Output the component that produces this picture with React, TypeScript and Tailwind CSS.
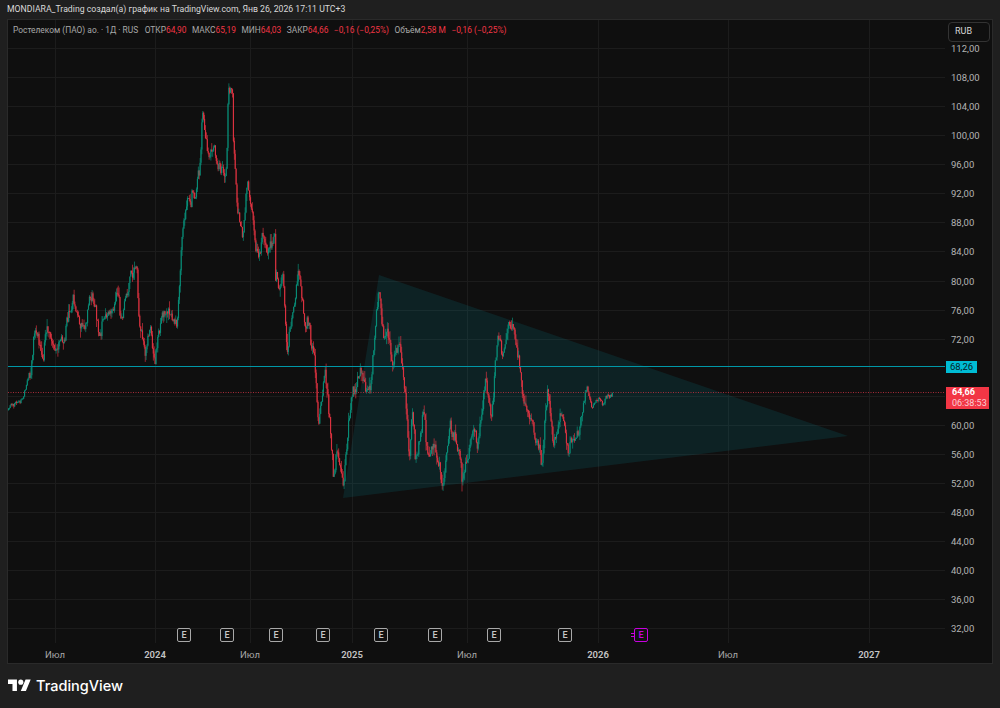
import React from "react";

// pixel trace of the price swing, page coordinates
const pricePath: [number, number][] = [
  [8, 410], [14, 406], [20, 402], [25, 388], [30, 372], [33, 345], [37, 330], [42, 355], [48, 325], [55, 345], [63, 337], [73, 295],
  [80, 323], [86, 318], [92, 295], [99, 340], [110, 308], [115, 295], [123, 316], [130, 268], [137, 275],
  [138, 312], [145, 355], [150, 330], [155, 360], [163, 310], [170, 312], [177, 315], [180, 265], [183, 222], [188, 192],
  [195, 205], [200, 160], [202, 106], [208, 158], [213, 145], [217, 165], [226, 168], [228, 84], [232, 90], [233, 137],
  [237, 200], [242, 235], [247, 185], [253, 217], [258, 268], [262, 224], [267, 255], [275, 236], [272, 286], [282, 278],
  [287, 345], [298, 278], [302, 304], [307, 327], [313, 345], [318, 424], [324, 373], [330, 422], [333, 482], [337, 458],
  [343, 489], [348, 427], [353, 390], [361, 374], [370, 391], [375, 328], [379, 280], [383, 340], [387, 332], [392, 372],
  [399, 339], [405, 400], [409, 460], [412, 413], [415, 454], [423, 418], [428, 454], [433, 441], [443, 480], [450, 420],
  [462, 473], [473, 428], [477, 443], [485, 388], [491, 413], [497, 345], [503, 356], [509, 326], [513, 335], [520, 367],
  [523, 403], [533, 429], [541, 460], [548, 385], [553, 438], [561, 409], [568, 446], [578, 429], [587, 394], [592, 406],
  [597, 398], [602, 403], [612, 392],
];

const priceAt = (x: number) => {
  for (let i = 1; i < pricePath.length; i++) {
    const [x0, y0] = pricePath[i - 1];
    const [x1, y1] = pricePath[i];
    if (x <= x1) return y0 + ((y1 - y0) * (x - x0)) / (x1 - x0);
  }
  return pricePath[pricePath.length - 1][1];
};

const makeBars = () => {
  let seed = 1337;
  const rnd = () => {
    seed = (seed * 16807) % 2147483647;
    return seed / 2147483647;
  };
  const bars = [];
  let prev = priceAt(8);
  let drift = 0;
  let n = 0;
  for (let x = 8; x <= 612; x += 0.9) {
    const calm = x < 30 || x > 585;
    // short swings that last a few bars, so the line doesn't read as smooth
    if (n++ % 4 === 0) drift = (rnd() - 0.5) * (calm ? 7 : 16);
    const close = priceAt(x) + drift + (rnd() - 0.5) * (calm ? 5 : 9);
    const top = Math.min(prev, close);
    const bottom = Math.max(prev, close);
    bars.push({
      x,
      top,
      bottom,
      high: Math.max(top - rnd() * rnd() * (calm ? 3 : 10), 79),
      low: Math.min(bottom + rnd() * rnd() * (calm ? 3 : 10), 497),
      color: close > prev ? "#f23645" : "#089981",
    });
    prev = close;
  }
  return bars;
};

const bars = makeBars();

const priceLabels = [
  ["112,00", 48], ["108,00", 77], ["104,00", 106], ["100,00", 135], ["96,00", 164], ["92,00", 193], ["88,00", 222],
  ["84,00", 251], ["80,00", 281], ["76,00", 310], ["72,00", 339], ["60,00", 425], ["56,00", 454], ["52,00", 483],
  ["48,00", 512], ["44,00", 541], ["40,00", 570], ["36,00", 599], ["32,00", 628],
] as const;

const timeLabels = [
  ["Июл", 55, false], ["2024", 155, true], ["Июл", 250, false], ["2025", 352, true],
  ["Июл", 467, false], ["2026", 598, true], ["Июл", 728, false], ["2027", 869, true],
] as const;

const earnings = [184, 227, 276, 323, 381, 435, 494, 565];

const Legend = ({ label, value }: { label: string; value: string }) => (
  <span className="flex">
    <span>{label}</span>
    <span className="text-[#f23645]">{value}</span>
  </span>
);

export default function App() {
  return (
    <div className="w-[1000px] h-[708px] bg-[#1f1f1f] flex flex-col overflow-hidden font-['Roboto',sans-serif] text-[#d4d4d4]">
      <div className="h-[19px] pl-[7px] pt-[1px] flex items-center text-[8.7px] text-[#d8d8d8] whitespace-nowrap">
        MONDIARA_Trading создал(а) график на TradingView.com, Янв 26, 2026 17:11 UTC+3
      </div>

      <div className="relative mx-[7px] h-[645px] border border-[#2a2a2a] bg-[#0f0f0f] overflow-hidden">
        <svg className="absolute inset-0" width="984" height="643" viewBox="8 20 984 643">
          {priceLabels.map(([label, y]) => (
            <line key={label} x1="8" x2="945" y1={y + 0.5} y2={y + 0.5} stroke="#1c1c1c" />
          ))}
          <line x1="8" x2="945" y1="396.5" y2="396.5" stroke="#1c1c1c" />
          {timeLabels.map(([label, x]) => (
            <line key={`${label}${x}`} x1={x + 0.5} x2={x + 0.5} y1="20" y2="643" stroke="#1c1c1c" />
          ))}
          <polygon points="379,275 848,436 343,498" fill="#00bcd4" fillOpacity="0.11" />
          {bars.map((b) => (
            <g key={b.x} fill={b.color} fillOpacity="0.75">
              <rect x={b.x} y={b.high} width="0.8" height={b.low - b.high} />
              <rect x={b.x - 0.2} y={b.top} width="1.2" height={Math.max(b.bottom - b.top, 0.8)} />
            </g>
          ))}
          <line x1="8" x2="945" y1="366.5" y2="366.5" stroke="#0097a7" strokeWidth="1.2" />
          <line x1="8" x2="945" y1="392.5" y2="392.5" stroke="#a62a38" strokeDasharray="1 1.5" />
        </svg>

        <div className="absolute left-[5px] top-[4px] flex gap-[5.5px] text-[8.4px] leading-[13px] text-[#a8a8a8] whitespace-nowrap">
          <span className="mr-[1px]">Ростелеком (ПАО) ао. · 1Д · RUS</span>
          <Legend label="ОТКР" value="64,90" />
          <Legend label="МАКС" value="65,19" />
          <Legend label="МИН" value="64,03" />
          <Legend label="ЗАКР" value="64,66" />
          <span className="text-[#f23645]">−0,16 (−0,25%)</span>
          <Legend label="Объём" value="2,58 M" />
          <span className="text-[#f23645]">−0,16 (−0,25%)</span>
        </div>

        <div className="absolute left-[940px] top-[2px] w-[42px] h-[20px] rounded-[4px] border border-[#333333] pl-[6px] flex items-center text-[9px] text-[#d8d8d8]">
          RUB
        </div>

        {priceLabels.map(([label, y]) => (
          <div
            key={label}
            className="absolute left-[943px] -translate-y-1/2 text-[9.5px] leading-[12px] text-[#b4b4b4]"
            style={{ top: y - 19 }}
          >
            {label}
          </div>
        ))}

        <div className="absolute left-[938px] top-[341px] w-[31px] h-[12px] bg-[#00bcd4] flex items-center justify-center text-[9.5px] leading-none text-[#062227]">
          68,26
        </div>
        <div className="absolute left-[938px] top-[367px] w-[43px] h-[22px] bg-[#f23645] pl-[6px] flex flex-col justify-center text-[9px] leading-[11px]">
          <span className="font-bold text-white">64,66</span>
          <span className="text-[#fbd0d5]">06:38:53</span>
        </div>

        {earnings.map((x) => (
          <div
            key={x}
            className="absolute top-[608px] w-[14px] h-[14px] -translate-x-1/2 rounded-[2px] border-[1.5px] border-[#a8a8a8] bg-[#111111] flex items-center justify-center text-[9px] font-medium leading-none text-[#c8c8c8]"
            style={{ left: x - 8 }}
          >
            E
          </div>
        ))}
        <div className="absolute left-[626px] top-[608px] w-[14px] h-[14px] rounded-[2px] border-[1.5px] border-[#c800e0] bg-[#111111] flex items-center justify-center text-[9px] font-medium leading-none text-[#c800e0]">
          E
        </div>
        <div className="absolute left-[623px] top-[613px] w-[4px] h-[4px] border-y border-[#c800e0]" />

        {timeLabels.map(([label, x, strong]) => (
          <div
            key={`${label}${x}`}
            className={`absolute top-[629px] -translate-x-1/2 text-[9.5px] leading-[12px] ${strong ? "font-semibold text-[#c4c4c4]" : "text-[#a8a8a8]"}`}
            style={{ left: x - 8 }}
          >
            {label}
          </div>
        ))}
      </div>

      <div className="flex-1 pl-[8px] pt-[11px] flex items-start gap-[5px] text-white">
        <svg width="23" height="18" viewBox="0 0 36 28" className="mt-[2px]">
          <path d="M14 22H7V11H0V4h14v18zM28 22h-8l7.5-18h8L28 22z" fill="#ffffff" />
          <circle cx="20" cy="8" r="4" fill="#ffffff" />
        </svg>
        <span className="font-['Inter',sans-serif] text-[14.5px] leading-[22px] font-medium">TradingView</span>
      </div>
    </div>
  );
}
